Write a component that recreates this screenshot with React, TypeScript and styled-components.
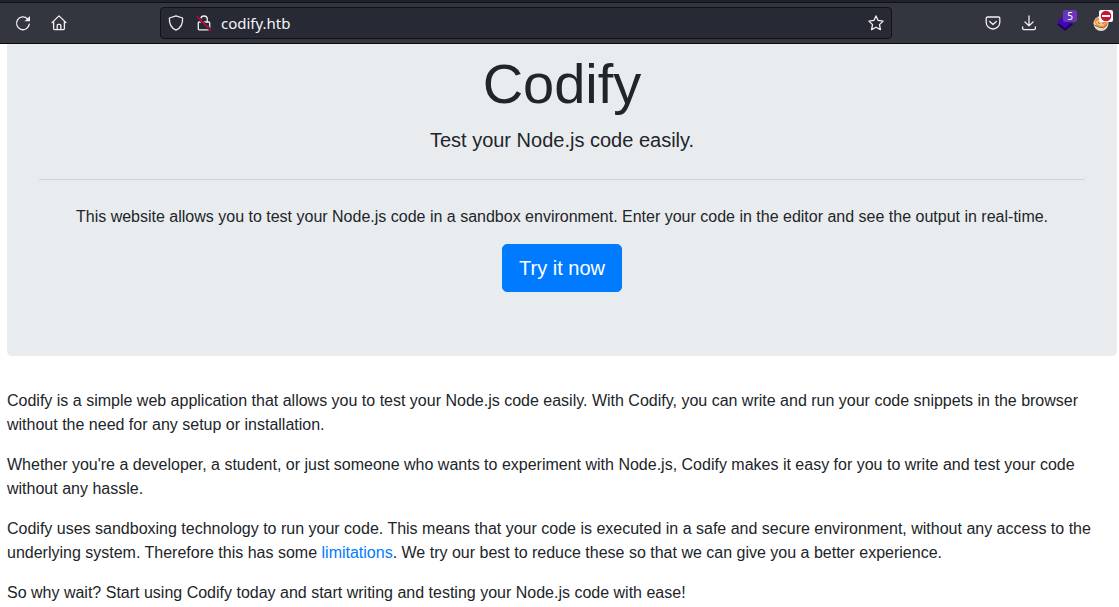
import React from "react";
import styled, { createGlobalStyle } from "styled-components";

const GlobalStyle = createGlobalStyle`
  *, *::before, *::after { box-sizing: border-box; }
  body {
    margin: 0;
    background: #fff;
    color: #212529;
    font-family: "Liberation Sans", Arial, sans-serif;
    font-size: 16px;
    line-height: 24px;
  }
`;

const Toolbar = styled.header`
  display: flex;
  align-items: center;
  height: 44px;
  background: #33353f;
  border-top: 2px solid #20222b;
  border-bottom: 1px solid #0c0c0f;
  box-shadow: inset 0 1px 0 #101116;
`;

const ToolGroup = styled.nav<{ $side: "start" | "end" }>`
  display: flex;
  flex: none;
  align-items: center;
  gap: 12px;
  width: ${(p) => (p.$side === "start" ? 160 : 227)}px;
  padding: ${(p) => (p.$side === "start" ? "0 0 0 11px" : "0 6px 0 0")};
  justify-content: ${(p) => (p.$side === "start" ? "flex-start" : "flex-end")};
`;

const IconButton = styled.button`
  position: relative;
  display: flex;
  flex: none;
  align-items: center;
  justify-content: center;
  width: 24px;
  height: 24px;
  padding: 0;
  border: 0;
  background: none;
  color: #f0f0f4;

  svg {
    display: block;
    overflow: visible;
  }
`;

const AddressBar = styled.div`
  display: flex;
  flex: 1;
  align-items: center;
  min-width: 0;
  height: 32px;
  padding: 0 3px;
  border: 1px solid #111217;
  border-radius: 4px;
  background: #272934;
`;

const SiteButtons = styled.div`
  display: flex;
  gap: 4px;
  margin-right: 5px;
`;

const AddressInput = styled.input`
  flex: 1;
  min-width: 0;
  height: 24px;
  padding: 0;
  border: 0;
  outline: 0;
  background: none;
  color: #f4f4f8;
  font: 15px/24px "Noto Sans", sans-serif;
`;

const CountBadge = styled.span`
  position: absolute;
  top: -1px;
  right: 0;
  width: 14px;
  height: 12px;
  border-radius: 2px;
  background: #6836b8;
  color: #fff;
  font: 10px/12px "Noto Sans", sans-serif;
  text-align: center;
`;

const BlockedBadge = styled.span`
  position: absolute;
  top: -1px;
  right: 0;
  width: 14px;
  height: 12px;
  border-radius: 2px;
  background: #fff;

  svg {
    margin: 0 auto;
  }
`;

const Page = styled.main`
  padding: 0 2px 3px 7px;
`;

const Hero = styled.section`
  margin-bottom: 32px;
  padding: 6px 32px 64px;
  border-radius: 0 0 5px 5px;
  background: #e9ecef;
  text-align: center;
`;

const Title = styled.h1`
  margin: 0 0 8px;
  font-size: 56px;
  font-weight: 300;
  line-height: 67px;
`;

const Lead = styled.p`
  margin: 0;
  font-size: 20px;
  font-weight: 300;
  line-height: 30px;
`;

const Divider = styled.hr`
  height: 1px;
  margin: 24px 0;
  border: 0;
  background: #d2d5d7;
`;

const Paragraph = styled.p`
  margin: 0 0 15px;
  padding-top: 1px;

  &:last-child {
    margin-bottom: 0;
  }
`;

const PrimaryLink = styled.a`
  display: inline-block;
  padding: 8px 16px;
  border: 1px solid #007bff;
  border-radius: 5px;
  background: #007bff;
  color: #fff;
  font-size: 20px;
  line-height: 30px;
  text-decoration: none;
  vertical-align: top;
`;

const TextLink = styled.a`
  color: #007bff;
  text-decoration: none;
`;

const stroke = {
  width: 16,
  height: 16,
  viewBox: "0 0 16 16",
  fill: "none",
  stroke: "currentColor",
  strokeWidth: 1.3,
  strokeLinecap: "round" as const,
  strokeLinejoin: "round" as const,
  "aria-hidden": true,
};

const ReloadIcon = () => (
  <svg {...stroke}>
    <path d="M14.3 9.2A6.4 6.4 0 1 1 12.4 3.7" />
    <path d="M15 1v5.300H9.500z" fill="currentColor" stroke="none" />
  </svg>
);

const HomeIcon = () => (
  <svg {...stroke}>
    <path d="M1 7.6 8 .9l7 6.7M2.6 6.5v7.1c0 .6.4 1 1 1h8.8c.6 0 1-.4 1-1V6.5" />
    <path d="M6.2 14.4v-4c0-.6.4-1 1-1h1.6c.6 0 1 .4 1 1v4" />
  </svg>
);

const ShieldIcon = () => (
  <svg {...stroke}>
    <path d="M8 .8 14.6 3c.3 4.900-1.500 9.800-6.600 12.200C2.900 12.800 1.100 7.900 1.400 3z" />
  </svg>
);

const InsecureIcon = () => (
  <svg {...stroke}>
    <path d="M4.700 7V4.300a3.300 3.300 0 0 1 6.600 0V7M3.300 7h9.400c.6 0 1 .4 1 1v5.800c0 .6-.4 1-1 1H3.300c-.6 0-1-.4-1-1V8c0-.6.4-1 1-1z" />
    <path d="M1.500 2 14.500 15" stroke="#272934" strokeWidth="3" />
    <path d="M1.200 1.700 14.500 15" stroke="#e2003c" />
  </svg>
);

const StarIcon = () => (
  <svg {...stroke}>
    <path d="m8 .9 2.100 4.500 5 .7-3.600 3.500.9 5L8 12.200l-4.400 2.400.9-5L.9 6.100l5-.7z" />
  </svg>
);

const PocketIcon = () => (
  <svg {...stroke}>
    <path d="M2.500 2h11c.8 0 1.300.5 1.300 1.300v4A6.700 6.700 0 0 1 8 14 6.700 6.700 0 0 1 1.200 7.300v-4C1.200 2.500 1.700 2 2.500 2z" />
    <path d="m4.700 6.500 3.300 3 3.300-3" />
  </svg>
);

const DownloadIcon = () => (
  <svg {...stroke}>
    <path d="M8 1v9.800M4 7l4 3.900L12 7M1.600 11.800v1.500c0 .8.5 1.300 1.300 1.300h10.200c.8 0 1.300-.5 1.300-1.300v-1.500" />
  </svg>
);

const LayersIcon = () => (
  <svg width="16" height="18" viewBox="0 0 16 18" aria-hidden>
    <path d="M0 10.500 8 5l8 5.500L8 17z" fill="#1d0068" />
    <path d="M0 7.500 8 1l8 6.500L8 14z" fill="#4507b4" />
  </svg>
);

const CookieIcon = () => (
  <svg width="16" height="16" viewBox="0 0 16 16" aria-hidden>
    <circle cx="8" cy="8.500" r="7.500" fill="#e8dccb" />
    <path d="m1 6 3-3.500 9.500 2L15 9l-4 3.500-7-1.500z" fill="#ee9440" />
    <path d="M2.500 6.500 7 5l5 3-2 3-5-1z" fill="#f8c48c" />
    <path d="m1.500 10 4 2 5 .8 3.500-3M5 7.500l2 1M9.500 8.500l2-1" fill="none" stroke="#9c5426" strokeWidth="1" />
  </svg>
);

const BlockedIcon = () => (
  <svg width="12" height="12" viewBox="0 0 12 12" aria-hidden>
    <circle cx="6" cy="6" r="5.300" fill="#c91432" />
    <path d="M2 5h8v2H2z" fill="#fff" />
  </svg>
);

export default function App() {
  return (
    <>
      <GlobalStyle />
      <Toolbar>
        <ToolGroup $side="start" aria-label="Navigation">
          <IconButton aria-label="Reload"><ReloadIcon /></IconButton>
          <IconButton aria-label="Home"><HomeIcon /></IconButton>
        </ToolGroup>
        <AddressBar>
          <SiteButtons>
            <IconButton aria-label="Tracking protection"><ShieldIcon /></IconButton>
            <IconButton aria-label="Connection is not secure"><InsecureIcon /></IconButton>
          </SiteButtons>
          <AddressInput aria-label="Address" defaultValue="codify.htb" spellCheck={false} />
          <IconButton aria-label="Bookmark this page"><StarIcon /></IconButton>
        </AddressBar>
        <ToolGroup $side="end" aria-label="Extensions">
          <IconButton aria-label="Save to Pocket"><PocketIcon /></IconButton>
          <IconButton aria-label="Downloads"><DownloadIcon /></IconButton>
          <IconButton aria-label="Wappalyzer">
            <LayersIcon />
            <CountBadge>5</CountBadge>
          </IconButton>
          <IconButton aria-label="Cookie manager">
            <CookieIcon />
            <BlockedBadge><BlockedIcon /></BlockedBadge>
          </IconButton>
        </ToolGroup>
      </Toolbar>
      <Page>
        <Hero>
          <Title>Codify</Title>
          <Lead>Test your Node.js code easily.</Lead>
          <Divider />
          <Paragraph>
            This website allows you to test your Node.js code in a sandbox environment. Enter your
            code in the editor and see the output in real-time.
          </Paragraph>
          <PrimaryLink href="#editor">Try it now</PrimaryLink>
        </Hero>
        <Paragraph>
          Codify is a simple web application that allows you to test your Node.js code easily. With
          Codify, you can write and run your code snippets in the browser without the need for any
          setup or installation.
        </Paragraph>
        <Paragraph>
          Whether you're a developer, a student, or just someone who wants to experiment with
          Node.js, Codify makes it easy for you to write and test your code without any hassle.
        </Paragraph>
        <Paragraph>
          Codify uses sandboxing technology to run your code. This means that your code is executed
          in a safe and secure environment, without any access to the underlying system. Therefore
          this has some <TextLink href="#limitations">limitations</TextLink>. We try our best to
          reduce these so that we can give you a better experience.
        </Paragraph>
        <Paragraph>
          So why wait? Start using Codify today and start writing and testing your Node.js code with
          ease!
        </Paragraph>
      </Page>
    </>
  );
}
